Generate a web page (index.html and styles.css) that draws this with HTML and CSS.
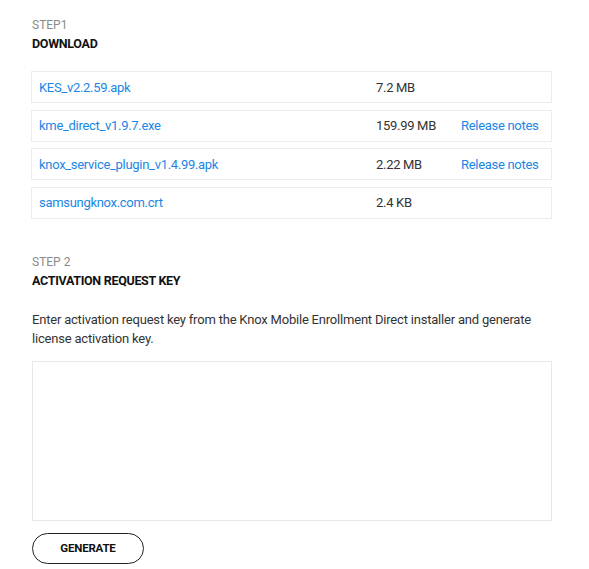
FILE: index.html
```html
<!DOCTYPE html>
<html lang="en">
<head>
<meta charset="utf-8">
<title>Download</title>
<link rel="stylesheet" href="styles.css">
</head>
<body>
<main class="page">
  <section class="step">
    <div class="step-label">STEP1</div>
    <h2 class="step-title">DOWNLOAD</h2>
    <ul class="files">
      <li class="file"><a class="file-name" href="#">KES_v2.2.59.apk</a><span class="file-size">7.2 MB</span><span class="file-notes"></span></li>
      <li class="file"><a class="file-name" href="#">kme_direct_v1.9.7.exe</a><span class="file-size">159.99 MB</span><a class="file-notes" href="#">Release notes</a></li>
      <li class="file"><a class="file-name" href="#">knox_service_plugin_v1.4.99.apk</a><span class="file-size">2.22 MB</span><a class="file-notes" href="#">Release notes</a></li>
      <li class="file"><a class="file-name" href="#">samsungknox.com.crt</a><span class="file-size">2.4 KB</span><span class="file-notes"></span></li>
    </ul>
  </section>
  <section class="step step-2">
    <div class="step-label">STEP 2</div>
    <h2 class="step-title">ACTIVATION REQUEST KEY</h2>
    <p class="desc">Enter activation request key from the Knox Mobile Enrollment Direct installer and generate license activation key.</p>
    <textarea class="key-input"></textarea>
    <button class="btn" type="button">GENERATE</button>
  </section>
</main>
</body>
</html>
```
FILE: styles.css
```css
html, body {
  margin: 0;
  padding: 0;
  background: #fff;
}
body {
  font-family: Roboto, "Noto Sans", sans-serif;
  color: #222;
}
.page {
  width: 521px;
  padding: 17px 0 0 31px;
}
.step-label {
  font-size: 12px;
  line-height: 16px;
  color: #8a8a8a;
  padding-left: 1px;
}
.step-title {
  margin: 2px 0 0;
  padding-left: 1px;
  font-size: 12.5px;
  line-height: 18px;
  font-weight: 700;
  letter-spacing: -0.3px;
  color: #111;
}
.files {
  list-style: none;
  margin: 18px 0 0;
  padding: 0;
  display: flex;
  flex-direction: column;
  gap: 6.5px;
}
.file {
  display: grid;
  grid-template-columns: 337px 85px 1fr;
  align-items: center;
  height: 30px;
  padding: 0 7px;
  border: 1px solid #ececec;
  font-size: 13px;
  letter-spacing: -0.3px;
  white-space: nowrap;
}
.file-name, .file-notes {
  color: #1a86e6;
  text-decoration: none;
}
.file-size {
  color: #333;
}
.step-2 {
  margin-top: 35px;
}
.desc {
  margin: 20px 0 0;
  padding-left: 1px;
  font-size: 13px;
  line-height: 19px;
  letter-spacing: -0.2px;
  color: #333;
}
.key-input {
  display: block;
  box-sizing: border-box;
  width: 520px;
  height: 160px;
  margin: 13px 0 0 1px;
  border: 1px solid #e8e8e8;
  resize: none;
  outline: none;
}
.btn {
  display: block;
  box-sizing: border-box;
  margin: 12px 0 0 1px;
  width: 112px;
  height: 31px;
  border: 1.5px solid #222;
  border-radius: 16px;
  background: #fff;
  font-family: Roboto, sans-serif;
  font-size: 11.5px;
  font-weight: 700;
  letter-spacing: -0.2px;
  color: #111;
  padding: 0;
}
```
